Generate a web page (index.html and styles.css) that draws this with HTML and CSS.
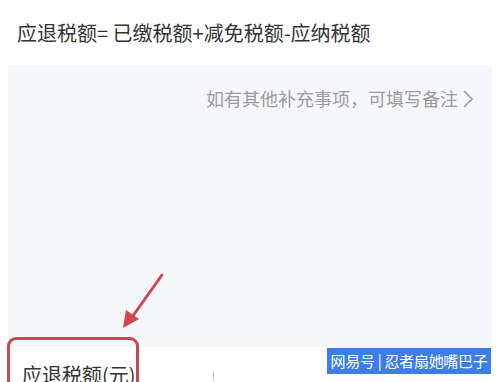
FILE: index.html
```html
<!DOCTYPE html>
<html lang="zh">
<head>
<meta charset="utf-8">
<link rel="stylesheet" href="styles.css">
</head>
<body>
<div class="page">
  <div class="title">应退税额= 已缴税额+减免税额-应纳税额</div>
  <div class="panel">
    <div class="hint">如有其他补充事项，可填写备注<svg class="chev" width="12" height="20" viewBox="0 0 12 20"><path d="M2 2 L10 10 L2 18" fill="none" stroke="#9a9a9a" stroke-width="1.6"/></svg></div>
  </div>
  <div class="row">
    <div class="label">应退税额(元)</div>
    <div class="tick"></div>
  </div>
  <svg class="arrow" width="60" height="70" viewBox="0 0 60 70"><line x1="46" y1="5" x2="14" y2="50" stroke="#d0454f" stroke-width="3" stroke-linecap="round"/><polygon points="7,58 10,40 23,49" fill="#d0454f"/></svg>
  <div class="redbox"></div>
  <div class="badge">网易号 | 忍者扇她嘴巴子</div>
</div>
</body>
</html>
```
FILE: styles.css
```css
html, body { margin: 0; padding: 0; background: #fff; }
body { font-family: "Noto Sans CJK SC", "Noto Sans", sans-serif; }
.page { position: relative; width: 500px; height: 382px; overflow: hidden; }
.title { padding: 19px 0 0 17px; height: 65px; box-sizing: border-box; font-size: 20px; line-height: 28px; color: #333; }
.panel { margin: 0 8px; height: 282px; background: #f6f7fa; box-sizing: border-box; padding-top: 20px; }
.hint { display: flex; justify-content: flex-end; align-items: center; gap: 4px; padding-right: 18px; font-size: 18px; line-height: 26px; color: #9b9b9b; }
.chev { margin-top: 1px; }
.row { display: flex; align-items: flex-start; padding: 15px 0 0 22px; }
.label { font-size: 20px; line-height: 26px; color: #333; }
.tick { width: 1px; height: 10px; background: #ccc; margin: 9px 0 0 77px; }
.arrow { position: absolute; left: 116px; top: 270px; }
.redbox { position: absolute; left: 7px; top: 337px; width: 132px; height: 60px; border: 3px solid #c9474f; border-radius: 9px; box-sizing: border-box; }
.badge { position: absolute; left: 327px; top: 348px; width: 164px; height: 26px; background: #3c7ee6; color: #fff; font-size: 15px; line-height: 26px; text-align: center; white-space: nowrap; letter-spacing: -0.3px; }
```
